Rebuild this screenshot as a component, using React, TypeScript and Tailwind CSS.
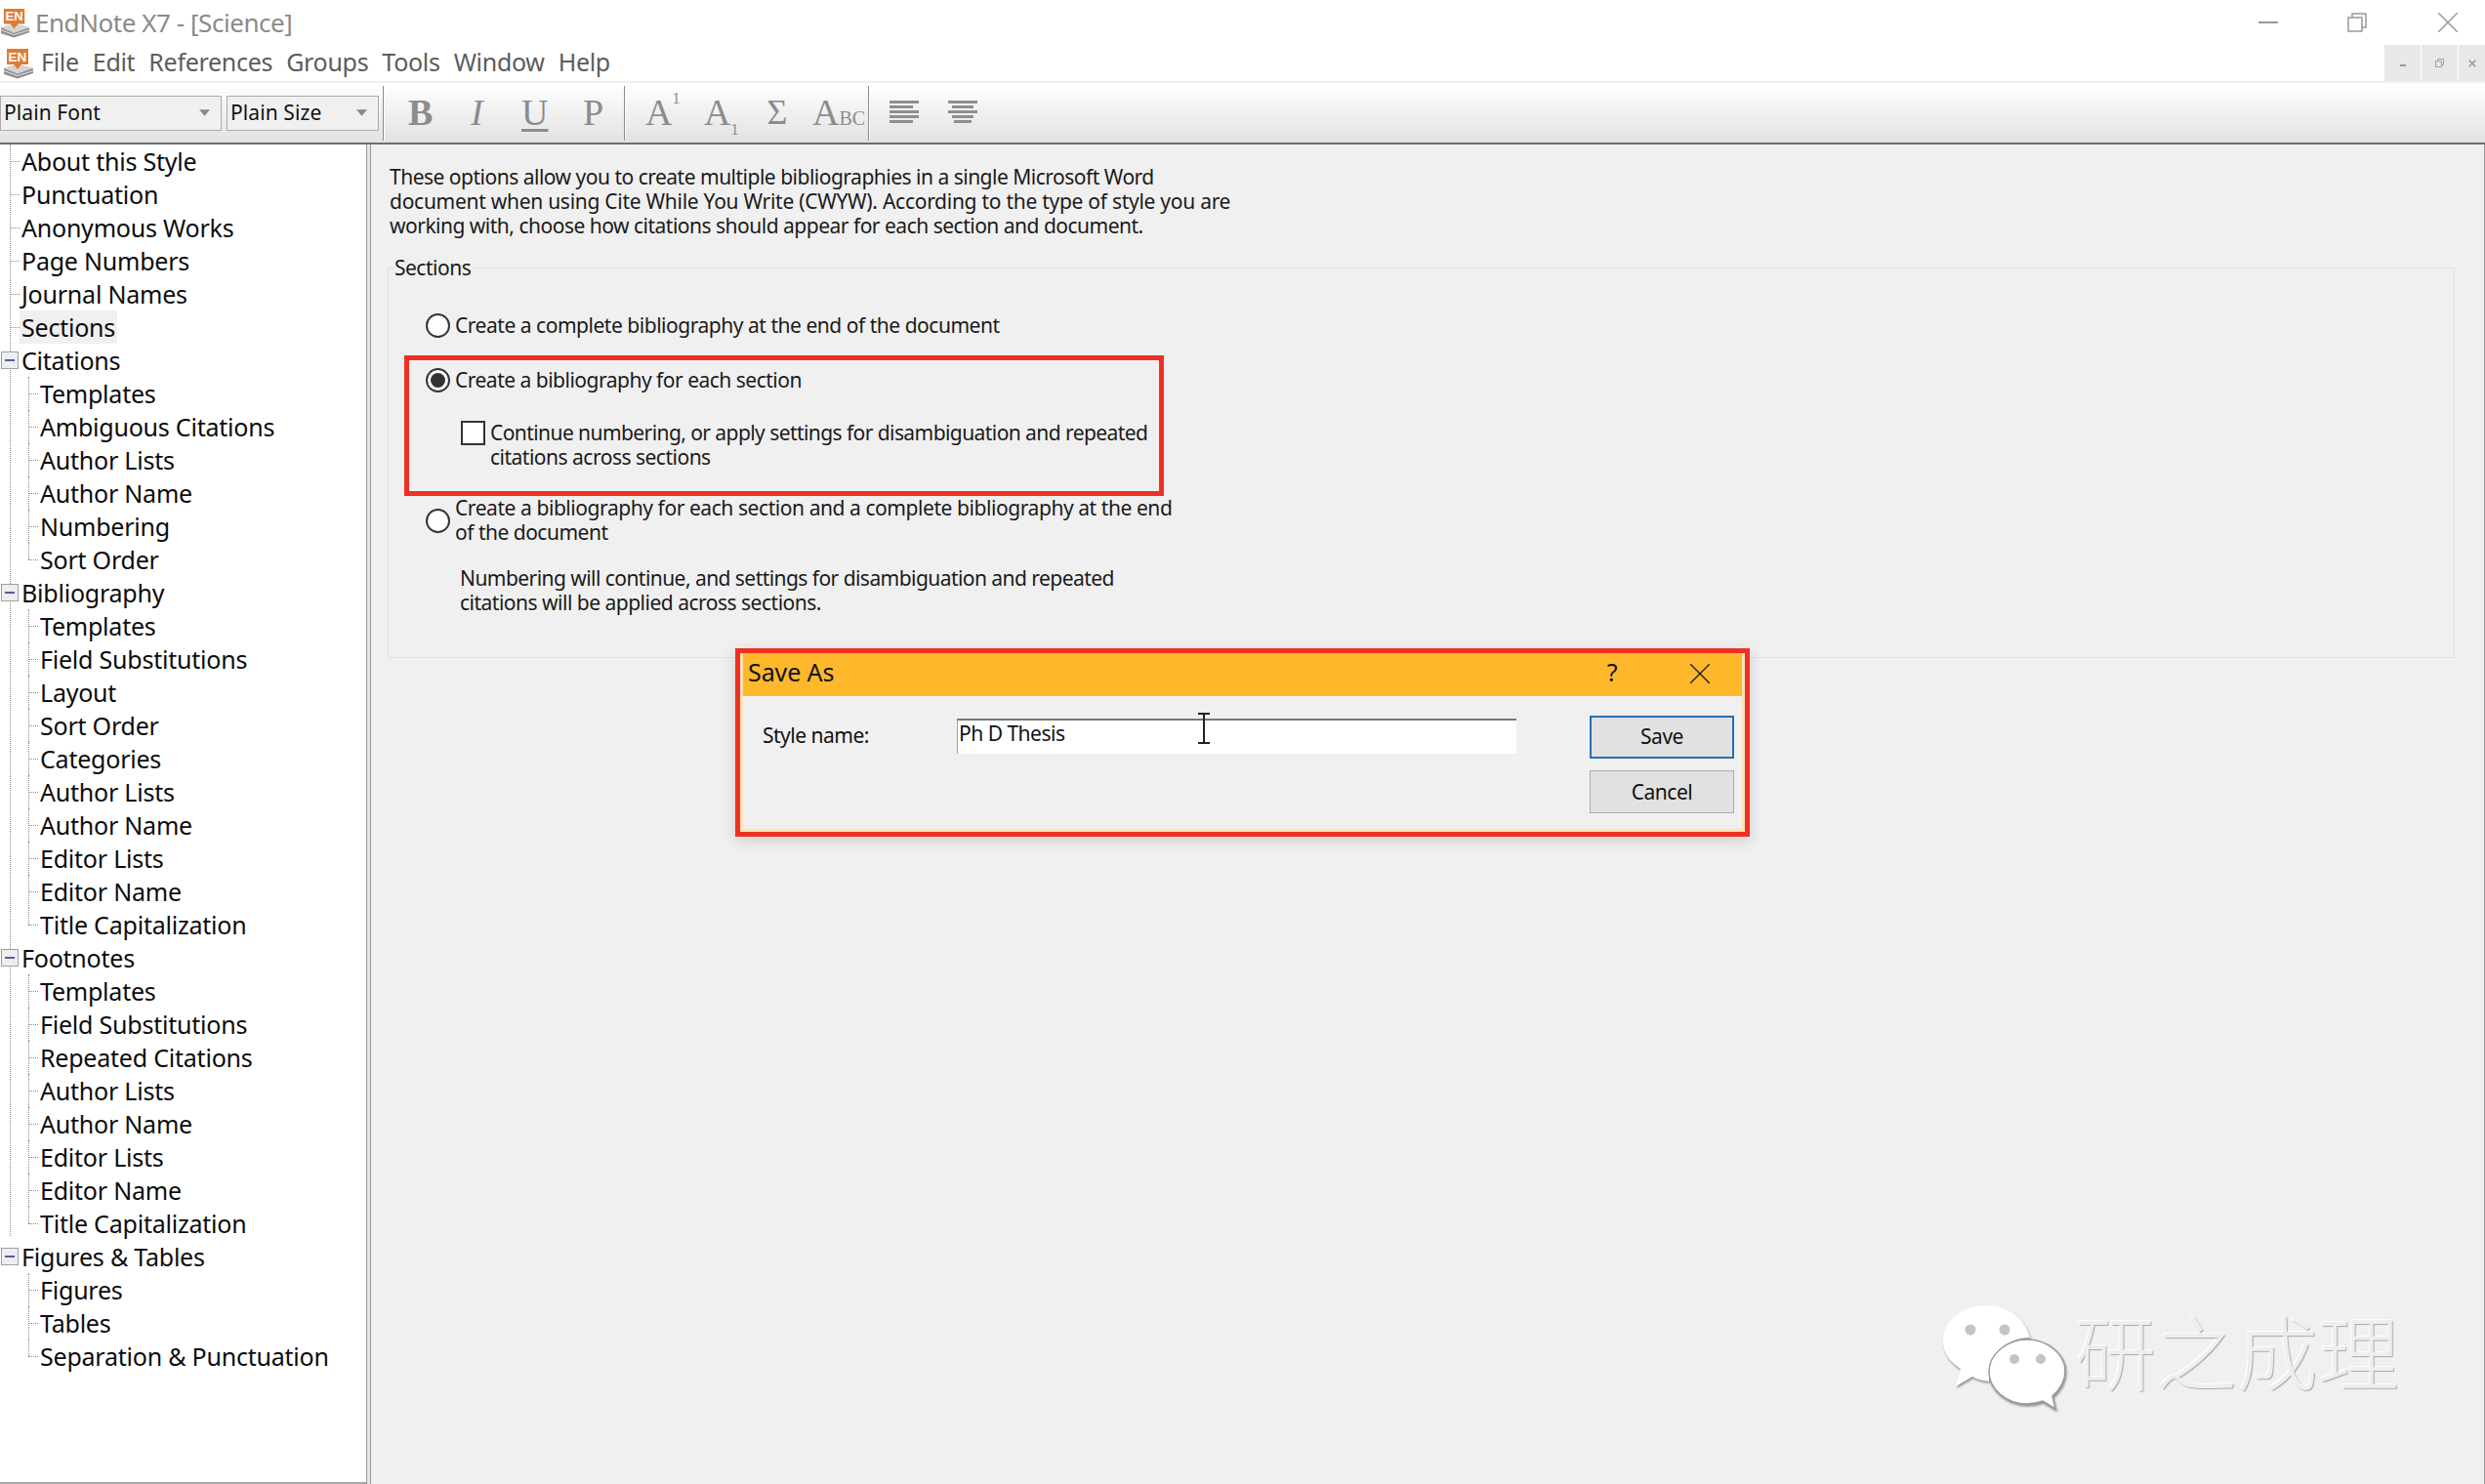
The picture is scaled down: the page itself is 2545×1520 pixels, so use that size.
const ui = 'font-["Noto_Sans","Open_Sans",sans-serif]';

const tree: { label: string; level: number; open?: boolean; selected?: boolean; last?: boolean }[] = [
  { label: 'About this Style', level: 0 },
  { label: 'Punctuation', level: 0 },
  { label: 'Anonymous Works', level: 0 },
  { label: 'Page Numbers', level: 0 },
  { label: 'Journal Names', level: 0 },
  { label: 'Sections', level: 0, selected: true },
  { label: 'Citations', level: 0, open: true },
  { label: 'Templates', level: 1 },
  { label: 'Ambiguous Citations', level: 1 },
  { label: 'Author Lists', level: 1 },
  { label: 'Author Name', level: 1 },
  { label: 'Numbering', level: 1 },
  { label: 'Sort Order', level: 1, last: true },
  { label: 'Bibliography', level: 0, open: true },
  { label: 'Templates', level: 1 },
  { label: 'Field Substitutions', level: 1 },
  { label: 'Layout', level: 1 },
  { label: 'Sort Order', level: 1 },
  { label: 'Categories', level: 1 },
  { label: 'Author Lists', level: 1 },
  { label: 'Author Name', level: 1 },
  { label: 'Editor Lists', level: 1 },
  { label: 'Editor Name', level: 1 },
  { label: 'Title Capitalization', level: 1, last: true },
  { label: 'Footnotes', level: 0, open: true },
  { label: 'Templates', level: 1 },
  { label: 'Field Substitutions', level: 1 },
  { label: 'Repeated Citations', level: 1 },
  { label: 'Author Lists', level: 1 },
  { label: 'Author Name', level: 1 },
  { label: 'Editor Lists', level: 1 },
  { label: 'Editor Name', level: 1 },
  { label: 'Title Capitalization', level: 1, last: true },
  { label: 'Figures & Tables', level: 0, open: true },
  { label: 'Figures', level: 1 },
  { label: 'Tables', level: 1 },
  { label: 'Separation & Punctuation', level: 1, last: true },
];

function EnIcon({ className }: { className: string }) {
  return (
    <svg viewBox="0 0 32 32" className={className}>
      <path d="M1 21 L15 17 L31 21 L31 26 L15 31.5 L1 27 Z" fill="#8f8f8f" />
      <path d="M1 23.5 L15 28.5 L31 23.5" fill="none" stroke="#e4e4e4" strokeWidth="1" />
      <path d="M1 21 L15 17 L31 21 L15 26.5 Z" fill="#d4d4d4" />
      <path d="M4 1 H26 V17 H19 L15 22 L11 17 H4 Z" fill="#de7c33" />
      <text x="15" y="13.5" textAnchor="middle" fontSize="13.5" fontWeight="700" fill="#fff" fontFamily="Liberation Sans, sans-serif">EN</text>
    </svg>
  );
}

function Sep() {
  return <div className="w-px h-[56px] bg-[#8a8a8a] border-r border-white box-content" />;
}

function ToolGlyph({ children, className }: { children: React.ReactNode; className: string }) {
  return (
    <span className={`font-["Liberation_Serif",serif] text-[#8c8c8c] text-center leading-none -mt-[2px] ${className}`}>{children}</span>
  );
}

function AlignIcon({ center }: { center?: boolean }) {
  const rows = center ? [[0, 30], [4, 22], [0, 30], [4, 22], [6, 18]] : [[0, 30], [0, 24], [0, 30], [0, 30], [0, 24]];
  return (
    <svg viewBox="0 0 30 24" className="w-[30px] h-[24px] -mt-[2px]">
      {rows.map(([x, w], i) => (
        <rect key={i} x={x} y={i * 5} width={w} height="3" fill="#8f8f8f" />
      ))}
    </svg>
  );
}

function Select({ label, width }: { label: string; width: string }) {
  return (
    <div className={`h-[36px] ${width} border border-[#ababab] bg-[#f0f0f0] flex items-center justify-between pl-[3px] pr-[11px]`}>
      <span className="text-[21px] text-[#111] tracking-[0.1px]">{label}</span>
      <svg viewBox="0 0 10 6" className="w-[11px] h-[7px]"><path d="M0 0H10L5 6Z" fill="#888" /></svg>
    </div>
  );
}

function Radio({ checked }: { checked?: boolean }) {
  return (
    <span className="w-[25px] h-[25px] shrink-0 rounded-full border-2 border-[#333] bg-white flex items-center justify-center">
      {checked && <span className="w-[15px] h-[15px] rounded-full bg-[#333]" />}
    </span>
  );
}

function TreeRow({ label, level, open, selected, last }: (typeof tree)[number]) {
  return (
    <div className="h-[34px] flex items-center relative">
      {level === 1 && (
        <>
          <span className={`absolute left-[29px] top-0 border-l border-dotted border-[#888] ${last ? 'h-[17px]' : 'h-[34px]'}`} />
          <span className="absolute left-[29px] top-[17px] w-[10px] border-t border-dotted border-[#888]" />
        </>
      )}
      {level === 0 && !open && (
        <span className="absolute left-[10px] top-[17px] w-[10px] border-t border-dotted border-[#888]" />
      )}
      {open && (
        <span className="absolute left-[1px] top-[8px] w-[18px] h-[18px] border border-[#a0a0a0] bg-[#eceef2] flex items-center justify-center">
          <span className="w-[10px] h-[2px] bg-[#5a5a9a]" />
        </span>
      )}
      <span
        className={`text-[25px] text-[#0c0c0c] leading-[34px] px-[2px] tracking-[-0.22px] ${level === 1 ? 'ml-[39px]' : 'ml-[20px]'} ${selected ? 'bg-[#f0f0f0]' : ''}`}
      >
        {label}
      </span>
    </div>
  );
}

export default function App() {
  return (
    <div className={`w-[2545px] h-[1520px] overflow-hidden bg-white flex flex-col relative ${ui}`}>
      {/* title bar */}
      <div className="h-[46px] flex items-center shrink-0">
        <div className="flex items-center w-full pr-[28px]">
          <EnIcon className="w-[31px] h-[31px]" />
          <span className="ml-[5px] text-[26px] text-[#8a8a8a] tracking-[-0.45px]">EndNote X7 - [Science]</span>
          <div className="ml-auto flex items-center gap-[71px]">
            <span className="w-[20px] h-[2px] bg-[#999]" />
            <svg viewBox="0 0 20 20" className="w-[20px] h-[20px]" fill="none" stroke="#999" strokeWidth="1.5">
              <rect x="1" y="5" width="14" height="14" />
              <path d="M5 5V1H19V15H15" />
            </svg>
            <svg viewBox="0 0 20 20" className="w-[20px] h-[20px] ml-[2px]" stroke="#999" strokeWidth="1.5">
              <path d="M0 0L20 20M20 0L0 20" />
            </svg>
          </div>
        </div>
      </div>

      {/* menu bar */}
      <div className="h-[37px] flex items-center shrink-0 pl-[3px] relative">
        <EnIcon className="w-[32px] h-[32px]" />
        <nav className="ml-[7px] -mt-[2px] flex gap-[14px] text-[25px] text-[#5c5c5c] tracking-[-0.3px]">
          {['File', 'Edit', 'References', 'Groups', 'Tools', 'Window', 'Help'].map((m) => (
            <span key={m}>{m}</span>
          ))}
        </nav>
        <div className="ml-auto flex gap-px self-stretch">
          <span className="w-[37px] bg-[#e8e8e8] flex items-center justify-center text-[#999]"><span className="w-[6px] h-[2px] bg-[#999] mt-[4px]" /></span>
          <span className="w-[37px] bg-[#e8e8e8] flex items-center justify-center">
            <svg viewBox="0 0 10 10" className="w-[9px] h-[9px]" fill="none" stroke="#999"><rect x="0.5" y="3" width="6.5" height="6.5" /><path d="M3 3V0.5H9.5V7H7" /></svg>
          </span>
          <span className="w-[27px] bg-[#e8e8e8] flex items-center justify-center">
            <svg viewBox="0 0 10 10" className="w-[8px] h-[8px]" stroke="#999" strokeWidth="2"><path d="M1 1L9 9M9 1L1 9" /></svg>
          </span>
        </div>
      </div>

      {/* toolbar */}
      <div className="h-[65px] shrink-0 border-t-2 border-[#f0f0f0] border-b-2 border-b-[#6e6e6e] bg-gradient-to-b from-white to-[#e2e2e2] flex items-center">
        <Select label="Plain Font" width="w-[227px]" />
        <div className="w-[5px]" />
        <Select label="Plain Size" width="w-[156px]" />
        <div className="w-[4px]" />
        <Sep />
        <div className="w-[24px]" />
        <ToolGlyph className="w-[21px] text-[38px] font-bold">B</ToolGlyph>
        <div className="w-[43px]" />
        <ToolGlyph className="w-[8px] text-[38px] italic">I</ToolGlyph>
        <div className="w-[44px]" />
        <ToolGlyph className="w-[26px] text-[38px] underline underline-offset-[4px]">U</ToolGlyph>
        <div className="w-[37px]" />
        <ToolGlyph className="w-[20px] text-[38px]">P</ToolGlyph>
        <div className="w-[22px]" />
        <Sep />
        <div className="w-[20px]" />
        <ToolGlyph className="w-[40px] text-[38px] text-left">A<sup className="text-[16px] align-[14px]">1</sup></ToolGlyph>
        <div className="w-[20px]" />
        <ToolGlyph className="w-[35px] text-[38px] text-left">A<sub className="text-[16px] align-[-6px]">1</sub></ToolGlyph>
        <div className="w-[28px]" />
        <ToolGlyph className="w-[24px] text-[36px]">Σ</ToolGlyph>
        <div className="w-[24px]" />
        <ToolGlyph className="w-[46px] text-[38px] text-left whitespace-nowrap">A<span className="text-[20px]">BC</span></ToolGlyph>
        <div className="w-[11px]" />
        <Sep />
        <div className="w-[20px]" />
        <AlignIcon />
        <div className="w-[30px]" />
        <AlignIcon center />
      </div>

      {/* body */}
      <div className="flex-1 flex min-h-0 text-[#1a1a1a]">
        <aside className="w-[375px] shrink-0 bg-white border-b-2 border-b-[#a8a8a8] relative">
          <span className="absolute left-[10px] top-0 h-[1118px] border-l border-dotted border-[#888]" />
          {tree.map((item, i) => (
            <TreeRow key={i} {...item} />
          ))}
        </aside>
        <div className="w-[5px] shrink-0 bg-[#e4e4e4] border-x border-x-[#9a9a9a]" />
        <main className="flex-1 bg-[#f0f0f0] border-r border-r-[#9a9a9a] relative pl-[19px] pt-[21px] pr-[30px] text-[21px] leading-[25px] tracking-[-0.5px]">
          <p className="w-[880px]">
            These options allow you to create multiple bibliographies in a single Microsoft Word
            <br />
            <span className="tracking-[-0.27px]">document when using Cite While You Write (CWYW). According to the type of style you are</span>
            <br />
            working with, choose how citations should appear for each section and document.
          </p>

          <fieldset className="mt-[18px] -ml-[2px] border border-[#e0e0e0] h-[412px] pl-[38px] pt-[34px]">
            <legend className="-ml-[32px] pr-[2px]">Sections</legend>
            <div className="flex items-center gap-[5px] h-[25px]">
              <Radio />
              <span className="tracking-[-0.47px]">Create a complete bibliography at the end of the document</span>
            </div>
            <div className="flex items-center gap-[5px] h-[25px] mt-[31px]">
              <Radio checked />
              <span>Create a bibliography for each section</span>
            </div>
            <div className="flex items-start gap-[5px] mt-[29px] ml-[36px]">
              <span className="w-[25px] h-[25px] shrink-0 border-2 border-[#333] bg-white" />
              <span>
                <span className="tracking-[-0.57px]">Continue numbering, or apply settings for disambiguation and repeated</span>
                <br />
                citations across sections
              </span>
            </div>
            <div className="flex items-center gap-[5px] mt-[27px]">
              <Radio />
              <span>
                <span className="tracking-[-0.43px]">Create a bibliography for each section and a complete bibliography at the end</span>
                <br />
                of the document
              </span>
            </div>
            <p className="mt-[22px] ml-[35px]">
              <span className="tracking-[-0.55px]">Numbering will continue, and settings for disambiguation and repeated</span>
              <br />
              citations will be applied across sections.
            </p>
          </fieldset>
        </main>
      </div>

      {/* red highlight round the option */}
      <div className="absolute left-[414px] top-[364px] w-[778px] h-[144px] border-[5px] border-[#ee3124]" />

      {/* Save As dialog */}
      <div className="absolute left-[753px] top-[664px] w-[1039px] h-[193px] border-[5px] border-[#ee3124] bg-[#f0f0f0] shadow-[0_4px_14px_rgba(0,0,0,0.15)] text-[21px] tracking-[-0.5px] text-[#111]">
        <div className="h-full border-x-[3px] border-b-[3px] border-[#fbe3b4] flex flex-col">
          <div className="h-[44px] bg-[#ffb72b] flex items-center pl-[5px] pb-[5px] shrink-0">
            <span className="text-[25px] tracking-[-0.1px]">Save As</span>
            <span className="ml-auto text-[25px] mr-[75px]">?</span>
            <svg viewBox="0 0 20 20" className="w-[20px] h-[20px] mr-[33px] mt-[3px]" stroke="#222" strokeWidth="1.4">
              <path d="M0 0L20 20M20 0L0 20" />
            </svg>
          </div>
          <div className="flex-1 flex items-start pl-[20px]">
            <span className="w-[199px] mt-[25px]">Style name:</span>
            <div className="w-[573px] h-[36px] mt-[23px] bg-white border-t-2 border-t-[#777] border-l border-l-[#a0a0a0] pl-[1px] leading-[26px]">
              Ph D Thesis
            </div>
            <div className="ml-[75px] mt-[20px] flex flex-col gap-[12px]">
              <div className="w-[148px] h-[44px] bg-[#e1e1e1] border-2 border-[#2a6db5] flex items-center justify-center">Save</div>
              <div className="w-[148px] h-[44px] bg-[#e1e1e1] border border-[#adadad] flex items-center justify-center pt-[2px]">Cancel</div>
            </div>
          </div>
        </div>
      </div>

      {/* text cursor over the field */}
      <svg viewBox="0 0 20 34" className="absolute left-[1223px] top-[729px] w-[20px] h-[34px]" fill="none" stroke="#222" strokeWidth="2">
        <path d="M4 2H16M4 32H16M10 2V32" />
      </svg>

      {/* watermark */}
      <svg viewBox="0 0 126 107" className="absolute left-[1990px] top-[1337px] w-[126px] h-[107px] drop-shadow-[1px_2px_1px_rgba(0,0,0,0.4)]">
        <path d="M45 0C20 0 0 15 0 37C0 49 7 58 18 65L13 83L30 73C35 76 40 77 47 78C47 50 66 33 89 33C84 13 66 0 45 0Z" fill="#fff" />
        <circle cx="28" cy="25" r="5.5" fill="#c4c4c4" />
        <circle cx="63" cy="25" r="5.5" fill="#c4c4c4" />
        <path d="M86 35C65 35 47 50 47 68C47 86 65 101 86 101C92 101 97 100 102 98L115 106L112 93C120 86 125 77 125 67C125 50 107 35 86 35Z" fill="#fff" stroke="#9a9a9a" strokeWidth="1.5" />
        <circle cx="73" cy="55" r="5" fill="#c4c4c4" />
        <circle cx="100" cy="55" r="5" fill="#c4c4c4" />
      </svg>
      <span className='absolute left-[2125px] top-[1327px] text-[83px] leading-[110px] whitespace-nowrap font-["Noto_Sans_CJK_SC",sans-serif] font-light text-[#eeeeee] [text-shadow:1px_1px_1px_#a8a8a8,-1px_-1px_0_#fff]'>
        研之成理
      </span>
    </div>
  );
}
